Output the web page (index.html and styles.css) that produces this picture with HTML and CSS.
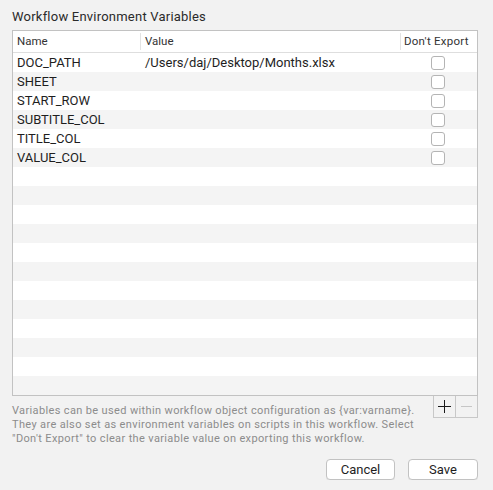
FILE: index.html
```html
<!DOCTYPE html>
<html>
<head>
<meta charset="utf-8">
<link rel="stylesheet" href="styles.css">
</head>
<body>
<div class="win">
  <div class="title">Workflow Environment Variables</div>
  <div class="table">
    <div class="thead">
      <div class="hc">Name</div>
      <div class="hc">Value</div>
      <div class="hc last">Don't Export</div>
    </div>
    <div class="tbody">
      <div class="row"><div class="c">DOC_PATH</div><div class="c">/Users/daj/Desktop/Months.xlsx</div><div class="cb"><span class="box"></span></div></div>
      <div class="row"><div class="c">SHEET</div><div class="c"></div><div class="cb"><span class="box"></span></div></div>
      <div class="row"><div class="c">START_ROW</div><div class="c"></div><div class="cb"><span class="box"></span></div></div>
      <div class="row"><div class="c">SUBTITLE_COL</div><div class="c"></div><div class="cb"><span class="box"></span></div></div>
      <div class="row"><div class="c">TITLE_COL</div><div class="c"></div><div class="cb"><span class="box"></span></div></div>
      <div class="row"><div class="c">VALUE_COL</div><div class="c"></div><div class="cb"><span class="box"></span></div></div>
      <div class="row"></div>
      <div class="row"></div>
      <div class="row"></div>
      <div class="row"></div>
      <div class="row"></div>
      <div class="row"></div>
      <div class="row"></div>
      <div class="row"></div>
      <div class="row"></div>
      <div class="row"></div>
      <div class="row"></div>
      <div class="row"></div>
    </div>
  </div>
  <div class="below">
    <p class="desc">Variables can be used within workflow object configuration as {var:varname}.<br>They are also set as environment variables on scripts in this workflow. Select<br>"Don't Export" to clear the variable value on exporting this workflow.</p>
    <div class="pm">
      <span class="pmb plus"><svg width="13" height="13" viewBox="0 0 13 13"><path d="M6.5 0V13M0 6.5H13" stroke="#1a1a1a" stroke-width="1" fill="none"/></svg></span>
      <span class="pmb minus"><svg width="13" height="13" viewBox="0 0 13 13"><path d="M1 6.5H12" stroke="#c6c6c6" stroke-width="1" fill="none"/></svg></span>
    </div>
  </div>
  <div class="actions">
    <button class="btn cancel">Cancel</button>
    <button class="btn save">Save</button>
  </div>
</div>
</body>
</html>
```

FILE: styles.css
```css
html, body {
  margin: 0;
  padding: 0;
  background: #f2f2f2;
}
body {
  font-family: Roboto, "Liberation Sans", Arial, sans-serif;
  color: #222;
}
.win {
  padding-left: 12px;
  width: 466px;
}
.title {
  box-sizing: border-box;
  height: 30px;
  padding-top: 9px;
  line-height: 16px;
  font-size: 13px;
  letter-spacing: 0.22px;
  color: #2a2a2a;
}
.table {
  box-sizing: border-box;
  width: 466px;
  border: 1px solid #c2c2c2;
  background: #fff;
}
.thead {
  display: grid;
  grid-template-columns: 128px 260px 76px;
  height: 21px;
  border-bottom: 1px solid #dedede;
  font-size: 11.5px;
  color: #333;
}
.hc {
  align-self: center;
  height: 17px;
  line-height: 17px;
  padding-left: 4px;
  border-right: 1px solid #e3e3e3;
}
.hc.last {
  border-right: none;
  padding-left: 3px;
  letter-spacing: 0.25px;
}
.row {
  display: grid;
  grid-template-columns: 128px 260px 76px;
  height: 19px;
  line-height: 19px;
  font-size: 13px;
  color: #1e1e1e;
}
.row:nth-child(even) {
  background: #f4f4f4;
}
.c {
  padding-left: 4px;
  white-space: nowrap;
}
.cb {
  display: flex;
  align-items: center;
  padding-left: 30px;
}
.box {
  box-sizing: border-box;
  width: 14px;
  height: 14px;
  border: 1px solid #b4b4b4;
  border-radius: 3px;
  background: #fff;
}
.below {
  display: flex;
  justify-content: space-between;
  align-items: flex-start;
  height: 50px;
}
.desc {
  margin: 8px 0 0 0;
  font-size: 11px;
  line-height: 14px;
  letter-spacing: 0.36px;
  color: #8c8c8c;
  white-space: nowrap;
}
.pm {
  display: flex;
}
.pmb {
  box-sizing: border-box;
  height: 22px;
  display: flex;
  align-items: center;
  justify-content: center;
  border-bottom: 1px solid #c8c8c8;
  border-right: 1px solid #c8c8c8;
}
.plus {
  width: 23px;
  border-left: 1px solid #c8c8c8;
}
.minus {
  width: 22px;
}
.actions {
  display: flex;
  justify-content: flex-end;
  gap: 13px;
  margin-top: 13px;
}
.btn {
  box-sizing: border-box;
  height: 21px;
  padding: 0;
  border: 1px solid #c2c2c2;
  border-radius: 4px;
  background: #fff;
  box-shadow: 0 1px 0 rgba(0,0,0,0.05);
  font-family: Roboto, "Liberation Sans", Arial, sans-serif;
  font-size: 13px;
  color: #1e1e1e;
  line-height: 19px;
}
.cancel {
  width: 69px;
}
.save {
  width: 70px;
}
```
